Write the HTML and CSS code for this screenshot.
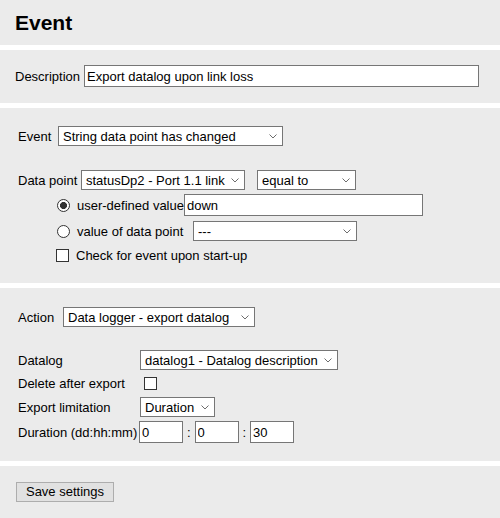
FILE: index.html
```html
<!DOCTYPE html>
<html lang="en">
<head>
<meta charset="utf-8">
<title>Event</title>
<link rel="stylesheet" href="styles.css">
</head>
<body>
<div class="panel p-title">
  <h1>Event</h1>
</div>

<div class="panel p-desc">
  <div class="row h22">
    <label class="lbl w-desc" for="desc">Description</label>
    <input id="desc" class="txt w-desc-in" type="text" value="Export datalog upon link loss">
  </div>
</div>

<div class="panel p-event">
  <div class="row h20 indent">
    <label class="lbl w-event">Event</label>
    <span class="sel w-event-sel">
      <select><option>String data point has changed</option></select>
      <svg class="chev" width="8" height="5" viewBox="0 0 8 5"><path d="M0.5 0.5 L4 4 L7.5 0.5" fill="none" stroke="#6d6d6d" stroke-width="1"/></svg>
    </span>
  </div>
  <div class="row h20 indent mt24">
    <label class="lbl w-dp">Data point</label>
    <span class="sel w-dp-sel">
      <select><option>statusDp2 - Port 1.1 link</option></select>
      <svg class="chev" width="8" height="5" viewBox="0 0 8 5"><path d="M0.5 0.5 L4 4 L7.5 0.5" fill="none" stroke="#6d6d6d" stroke-width="1"/></svg>
    </span>
    <span class="sel w-cmp-sel ml12">
      <select><option>equal to</option></select>
      <svg class="chev" width="8" height="5" viewBox="0 0 8 5"><path d="M0.5 0.5 L4 4 L7.5 0.5" fill="none" stroke="#6d6d6d" stroke-width="1"/></svg>
    </span>
  </div>
  <div class="row h22 mt4">
    <input class="radio" type="radio" name="src" checked>
    <label class="lbl w-udv">user-defined value</label>
    <input class="txt w-udv-in" type="text" value="down">
  </div>
  <div class="row h20 mt5">
    <input class="radio" type="radio" name="src">
    <label class="lbl w-vdp">value of data point</label>
    <span class="sel w-vdp-sel">
      <select><option>---</option></select>
      <svg class="chev" width="8" height="5" viewBox="0 0 8 5"><path d="M0.5 0.5 L4 4 L7.5 0.5" fill="none" stroke="#6d6d6d" stroke-width="1"/></svg>
    </span>
  </div>
  <div class="row h20 mt4">
    <input class="chk chk-start" type="checkbox">
    <label class="lbl">Check for event upon start-up</label>
  </div>
</div>

<div class="panel p-action">
  <div class="row h20 indent">
    <label class="lbl w-action">Action</label>
    <span class="sel w-action-sel">
      <select><option>Data logger - export datalog</option></select>
      <svg class="chev" width="8" height="5" viewBox="0 0 8 5"><path d="M0.5 0.5 L4 4 L7.5 0.5" fill="none" stroke="#6d6d6d" stroke-width="1"/></svg>
    </span>
  </div>
  <div class="row h20 indent mt23">
    <label class="lbl w-col">Datalog</label>
    <span class="sel w-datalog-sel">
      <select><option>datalog1 - Datalog description</option></select>
      <svg class="chev" width="8" height="5" viewBox="0 0 8 5"><path d="M0.5 0.5 L4 4 L7.5 0.5" fill="none" stroke="#6d6d6d" stroke-width="1"/></svg>
    </span>
  </div>
  <div class="row h13 indent mt7">
    <label class="lbl w-col">Delete after export</label>
    <input class="chk chk-del" type="checkbox">
  </div>
  <div class="row h20 indent mt7">
    <label class="lbl w-col">Export limitation</label>
    <span class="sel w-limit-sel">
      <select><option>Duration</option></select>
      <svg class="chev" width="8" height="5" viewBox="0 0 8 5"><path d="M0.5 0.5 L4 4 L7.5 0.5" fill="none" stroke="#6d6d6d" stroke-width="1"/></svg>
    </span>
  </div>
  <div class="row h22 indent mt4">
    <label class="lbl w-col w-dur">Duration (dd:hh:mm)</label>
    <input class="txt w-dur-in" type="text" value="0">
    <span class="colon">:</span>
    <input class="txt w-dur-in" type="text" value="0">
    <span class="colon">:</span>
    <input class="txt w-dur-in" type="text" value="30">
  </div>
</div>

<div class="panel p-save">
  <button class="btn" type="button">Save settings</button>
</div>
</body>
</html>
```

FILE: styles.css
```css
* {
  box-sizing: border-box;
}

body {
  margin: 0;
  background: #ffffff;
  color: #000000;
  font: 13px "Liberation Sans", Arial, sans-serif;
}

.panel {
  background: #ebebeb;
  padding-left: 15px;
  padding-right: 15px;
}

.panel + .panel {
  margin-top: 5px;
}

.p-title {
  padding-top: 11px;
  padding-bottom: 10px;
}

.p-title h1 {
  margin: 0;
  font-size: 21px;
  line-height: 24px;
  font-weight: bold;
}

.p-desc {
  padding-top: 15px;
  padding-bottom: 16px;
}

.p-event {
  padding-top: 18px;
  padding-bottom: 18px;
}

.p-action {
  padding-top: 19px;
  padding-bottom: 18px;
}

.p-save {
  padding-top: 16px;
  padding-bottom: 16px;
}

.row {
  display: flex;
  align-items: center;
}

.h13 { height: 13px; }
.h20 { height: 20px; }
.h22 { height: 22px; }

.mt4 { margin-top: 4px; }
.mt5 { margin-top: 5px; }
.mt7 { margin-top: 7px; }
.mt23 { margin-top: 23px; }
.mt24 { margin-top: 24px; }
.ml12 { margin-left: 12px; }

.indent {
  padding-left: 3px;
}

.lbl {
  flex: none;
  white-space: nowrap;
  line-height: 15px;
}

.w-desc { width: 69px; }
.w-event { width: 40px; }
.w-dp { width: 63px; }
.w-action { width: 45px; }
.w-col { width: 122px; }
.w-dur { width: 121px; }
.w-udv { width: 107px; }
.w-vdp { width: 116px; }

.txt {
  flex: none;
  height: 22px;
  margin: 0;
  padding: 0 2px;
  border: 1px solid #767676;
  border-radius: 0;
  background: #ffffff;
  color: #000000;
  font: 13px "Liberation Sans", Arial, sans-serif;
  outline: none;
}

.w-desc-in { width: 395px; }
.w-udv-in { width: 239px; }
.w-dur-in { width: 44px; }

.colon {
  flex: none;
  width: 11.5px;
  text-align: center;
  line-height: 15px;
}

.sel {
  position: relative;
  flex: none;
  display: block;
  height: 20px;
}

.sel select {
  -webkit-appearance: none;
  appearance: none;
  display: block;
  width: 100%;
  height: 20px;
  margin: 0;
  padding: 0 18px 0 4px;
  border: 1px solid #767676;
  border-radius: 0;
  background: #ffffff;
  color: #000000;
  font: 13px "Liberation Sans", Arial, sans-serif;
  outline: none;
}

.sel .chev {
  position: absolute;
  right: 6px;
  top: 8px;
  pointer-events: none;
}

.w-event-sel { width: 225px; }
.w-dp-sel { width: 164px; }
.w-cmp-sel { width: 99px; }
.w-vdp-sel { width: 164px; }
.w-action-sel { width: 192px; }
.w-datalog-sel { width: 198px; }
.w-limit-sel { width: 75px; }

.radio {
  -webkit-appearance: none;
  appearance: none;
  flex: none;
  width: 13px;
  height: 13px;
  margin: 0 7px 0 42px;
  border: 1px solid #333333;
  border-radius: 50%;
  background: #ffffff;
}

.radio:checked {
  background: radial-gradient(circle at center, #333333 0, #333333 3.2px, #ffffff 3.8px);
}

.chk {
  -webkit-appearance: none;
  appearance: none;
  flex: none;
  width: 13px;
  height: 13px;
  margin: 0;
  border: 1px solid #333333;
  border-radius: 0;
  background: #ffffff;
}

.chk-start {
  margin-left: 41px;
  margin-right: 7px;
}

.chk-del {
  margin-left: 4px;
}

.btn {
  display: block;
  width: 98px;
  height: 20px;
  margin: 0 0 0 1px;
  padding: 0;
  border: 1px solid #adadad;
  border-radius: 0;
  background: #e1e1e1;
  color: #000000;
  font: 13px "Liberation Sans", Arial, sans-serif;
  line-height: 18px;
  text-align: center;
}
```
